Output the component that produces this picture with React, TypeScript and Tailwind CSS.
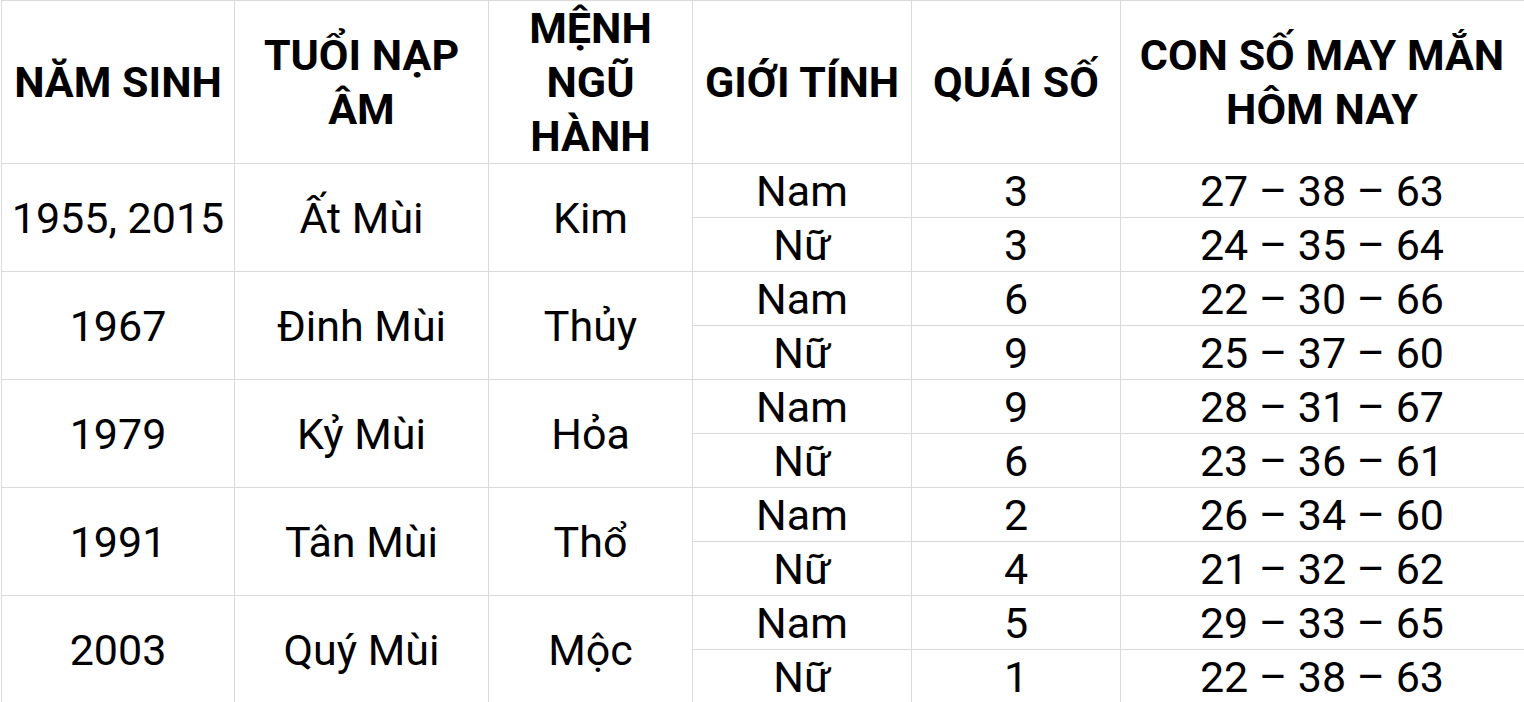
import React from "react";

const groups = [
  { year: "1955, 2015", tuoi: "Ất Mùi", menh: "Kim", rows: [["Nam", "3", "27 – 38 – 63"], ["Nữ", "3", "24 – 35 – 64"]] },
  { year: "1967", tuoi: "Đinh Mùi", menh: "Thủy", rows: [["Nam", "6", "22 – 30 – 66"], ["Nữ", "9", "25 – 37 – 60"]] },
  { year: "1979", tuoi: "Kỷ Mùi", menh: "Hỏa", rows: [["Nam", "9", "28 – 31 – 67"], ["Nữ", "6", "23 – 36 – 61"]] },
  { year: "1991", tuoi: "Tân Mùi", menh: "Thổ", rows: [["Nam", "2", "26 – 34 – 60"], ["Nữ", "4", "21 – 32 – 62"]] },
  { year: "2003", tuoi: "Quý Mùi", menh: "Mộc", rows: [["Nam", "5", "29 – 33 – 65"], ["Nữ", "1", "22 – 38 – 63"]] },
];

export default function App() {
  const th = "border border-[#dadada] font-bold text-[43px] leading-[54px] text-center align-middle p-0 whitespace-nowrap";
  const td = "border border-[#dadada] text-[43px] leading-[52px] text-center align-middle p-0 whitespace-nowrap";
  return (
    <div className="w-[1524px] h-[702px] overflow-hidden bg-white text-black pl-px" style={{ fontFamily: "Roboto, 'Noto Sans', sans-serif" }}>
      <table className="table-fixed border-collapse w-[1530px]">
        <colgroup>
          <col className="w-[233px]" />
          <col className="w-[254px]" />
          <col className="w-[204px]" />
          <col className="w-[219px]" />
          <col className="w-[209px]" />
          <col className="w-[411px]" />
        </colgroup>
        <thead>
          <tr className="h-[163px]">
            <th className={th}>NĂM SINH</th>
            <th className={th}>TUỔI NẠP<br />ÂM</th>
            <th className={th}>MỆNH<br />NGŨ<br />HÀNH</th>
            <th className={th}>GIỚI TÍNH</th>
            <th className={th}>QUÁI SỐ</th>
            <th className={`${th} pr-[8px]`}>CON SỐ MAY MẮN<br />HÔM NAY</th>
          </tr>
        </thead>
        <tbody>
          {groups.map((g) => (
            <React.Fragment key={g.year}>
              <tr className="h-[54px]">
                <td rowSpan={2} className={td}>{g.year}</td>
                <td rowSpan={2} className={td}>{g.tuoi}</td>
                <td rowSpan={2} className={td}>{g.menh}</td>
                <td className={td}>{g.rows[0][0]}</td>
                <td className={td}>{g.rows[0][1]}</td>
                <td className={`${td} pr-[8px]`}>{g.rows[0][2]}</td>
              </tr>
              <tr className="h-[54px]">
                <td className={td}>{g.rows[1][0]}</td>
                <td className={td}>{g.rows[1][1]}</td>
                <td className={`${td} pr-[8px]`}>{g.rows[1][2]}</td>
              </tr>
            </React.Fragment>
          ))}
        </tbody>
      </table>
    </div>
  );
}
